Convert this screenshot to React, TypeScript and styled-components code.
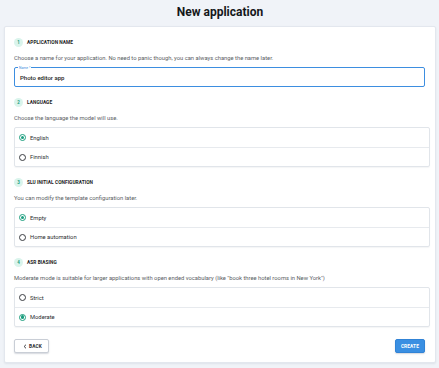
import React from 'react';
import styled, { createGlobalStyle } from 'styled-components';

const GlobalStyle = createGlobalStyle`
  html, body {
    margin: 0;
    padding: 0;
    background: #f0f3f8;
    font-family: Roboto, "Liberation Sans", sans-serif;
    color: #1d1d1f;
  }
`;

const Page = styled.div`
  width: 439px;
  height: 368px;
  box-sizing: border-box;
  padding: 0 3px 5px 4px;
  display: flex;
  flex-direction: column;
`;

const Title = styled.h1`
  margin: 0;
  flex-shrink: 0;
  height: 26px;
  display: flex;
  align-items: center;
  justify-content: center;
  font-size: 12px;
  font-weight: 700;
  color: #15171a;
  padding-bottom: 2px;
  box-sizing: border-box;
`;

const Card = styled.div`
  flex: 1;
  min-height: 0;
  background: #fff;
  border: 1px solid #e3e7ee;
  border-radius: 2px;
  box-shadow: 0 1px 2px rgba(30, 50, 80, 0.08);
  padding: 10px 5px 9px 9px;
  display: flex;
  flex-direction: column;
`;

const Section = styled.section`
  display: flex;
  flex-direction: column;
  margin-bottom: 10px;
`;

const Header = styled.div`
  display: flex;
  align-items: center;
  height: 10px;
  gap: 4px;
`;

const Badge = styled.span`
  width: 9px;
  height: 9px;
  border-radius: 50%;
  background: #daf4ec;
  color: #1c9e80;
  font-size: 4.5px;
  font-weight: 700;
  display: flex;
  align-items: center;
  justify-content: center;
`;

const Label = styled.span`
  font-size: 4.8px;
  font-weight: 700;
  text-transform: uppercase;
  color: #222;
  letter-spacing: 0.05px;
`;

const Description = styled.p`
  margin: 7px 0 0 0;
  font-size: 5.8px;
  line-height: 8px;
  color: #5a5e64;
`;

const Field = styled.div`
  margin: 5px 5px 0 0;
  padding: 0 5px;
  height: 20px;
  box-sizing: border-box;
  border: 1px solid #3d8ee0;
  border-radius: 2px;
  display: flex;
  align-items: center;
  position: relative;
`;

const Legend = styled.span`
  position: absolute;
  top: -2.5px;
  left: 3px;
  padding: 0 1px;
  background: #fff;
  font-size: 3.4px;
  line-height: 4px;
  color: #3d8ee0;
`;

const FieldValue = styled.span`
  font-size: 6px;
  font-weight: 500;
  color: #1c1d20;
`;

const Options = styled.div`
  margin-top: 5px;
  border: 1px solid #e1e5ea;
  border-radius: 2px;
  box-shadow: 0 1px 1px rgba(30, 50, 80, 0.05);
  display: flex;
  flex-direction: column;
`;

const Option = styled.label`
  height: 19px;
  box-sizing: border-box;
  display: flex;
  align-items: center;
  gap: 4px;
  padding-left: 4px;
  font-size: 5.8px;
  color: #2a2c30;
  & + & {
    border-top: 1px solid #e7eaee;
  }
`;

const Radio = styled.span<{ $on: boolean }>`
  width: 7px;
  height: 7px;
  box-sizing: border-box;
  border-radius: 50%;
  border: 1px solid ${p => (p.$on ? '#1c9e7e' : '#3a3d42')};
  display: flex;
  align-items: center;
  justify-content: center;
  &::after {
    content: '';
    width: 3.4px;
    height: 3.4px;
    border-radius: 50%;
    background: ${p => (p.$on ? '#1c9e7e' : 'transparent')};
  }
`;

const Footer = styled.div`
  margin-top: auto;
  display: flex;
  justify-content: space-between;
  align-items: center;
  padding-right: 5px;
`;

const Button = styled.button<{ $primary?: boolean }>`
  height: 14px;
  box-sizing: border-box;
  padding: ${p => (p.$primary ? '0 5px' : '0 6px 0 8px')};
  font-family: inherit;
  font-size: 4.8px;
  font-weight: 700;
  letter-spacing: 0.1px;
  border-radius: 2px;
  display: flex;
  align-items: center;
  gap: 2px;
  cursor: pointer;
  color: ${p => (p.$primary ? '#fff' : '#2b2d31')};
  background: ${p => (p.$primary ? '#3a8fe2' : '#fff')};
  border: 1px solid ${p => (p.$primary ? '#3183d6' : '#c9ced6')};
  box-shadow: 0 1px 1.5px rgba(20, 40, 70, 0.18);
`;

const Chevron = () => (
  <svg width="4" height="5" viewBox="0 0 4 5">
    <path d="M3 0.7 L1.1 2.5 L3 4.3" fill="none" stroke="#2b2d31" strokeWidth="0.9" />
  </svg>
);

type Choice = { label: string; on: boolean };

const steps: { n: number; title: string; text: string; choices?: Choice[] }[] = [
  {
    n: 1,
    title: 'Application name',
    text: 'Choose a name for your application. No need to panic though, you can always change the name later.',
  },
  {
    n: 2,
    title: 'Language',
    text: 'Choose the language the model will use.',
    choices: [
      { label: 'English', on: true },
      { label: 'Finnish', on: false },
    ],
  },
  {
    n: 3,
    title: 'SLU initial configuration',
    text: 'You can modify the template configuration later.',
    choices: [
      { label: 'Empty', on: true },
      { label: 'Home automation', on: false },
    ],
  },
  {
    n: 4,
    title: 'ASR biasing',
    text: 'Moderate mode is suitable for larger applications with open ended vocabulary (like "book three hotel rooms in New York")',
    choices: [
      { label: 'Strict', on: false },
      { label: 'Moderate', on: true },
    ],
  },
];

export default function App() {
  return (
    <>
      <GlobalStyle />
      <Page>
        <Title>New application</Title>
        <Card>
          {steps.map(step => (
            <Section key={step.n}>
              <Header>
                <Badge>{step.n}</Badge>
                <Label>{step.title}</Label>
              </Header>
              <Description>{step.text}</Description>
              {step.choices ? (
                <Options>
                  {step.choices.map(c => (
                    <Option key={c.label}>
                      <Radio $on={c.on} />
                      {c.label}
                    </Option>
                  ))}
                </Options>
              ) : (
                <Field>
                  <Legend>Name *</Legend>
                  <FieldValue>Photo editor app</FieldValue>
                </Field>
              )}
            </Section>
          ))}
          <Footer>
            <Button>
              <Chevron />
              BACK
            </Button>
            <Button $primary>CREATE</Button>
          </Footer>
        </Card>
      </Page>
    </>
  );
}
